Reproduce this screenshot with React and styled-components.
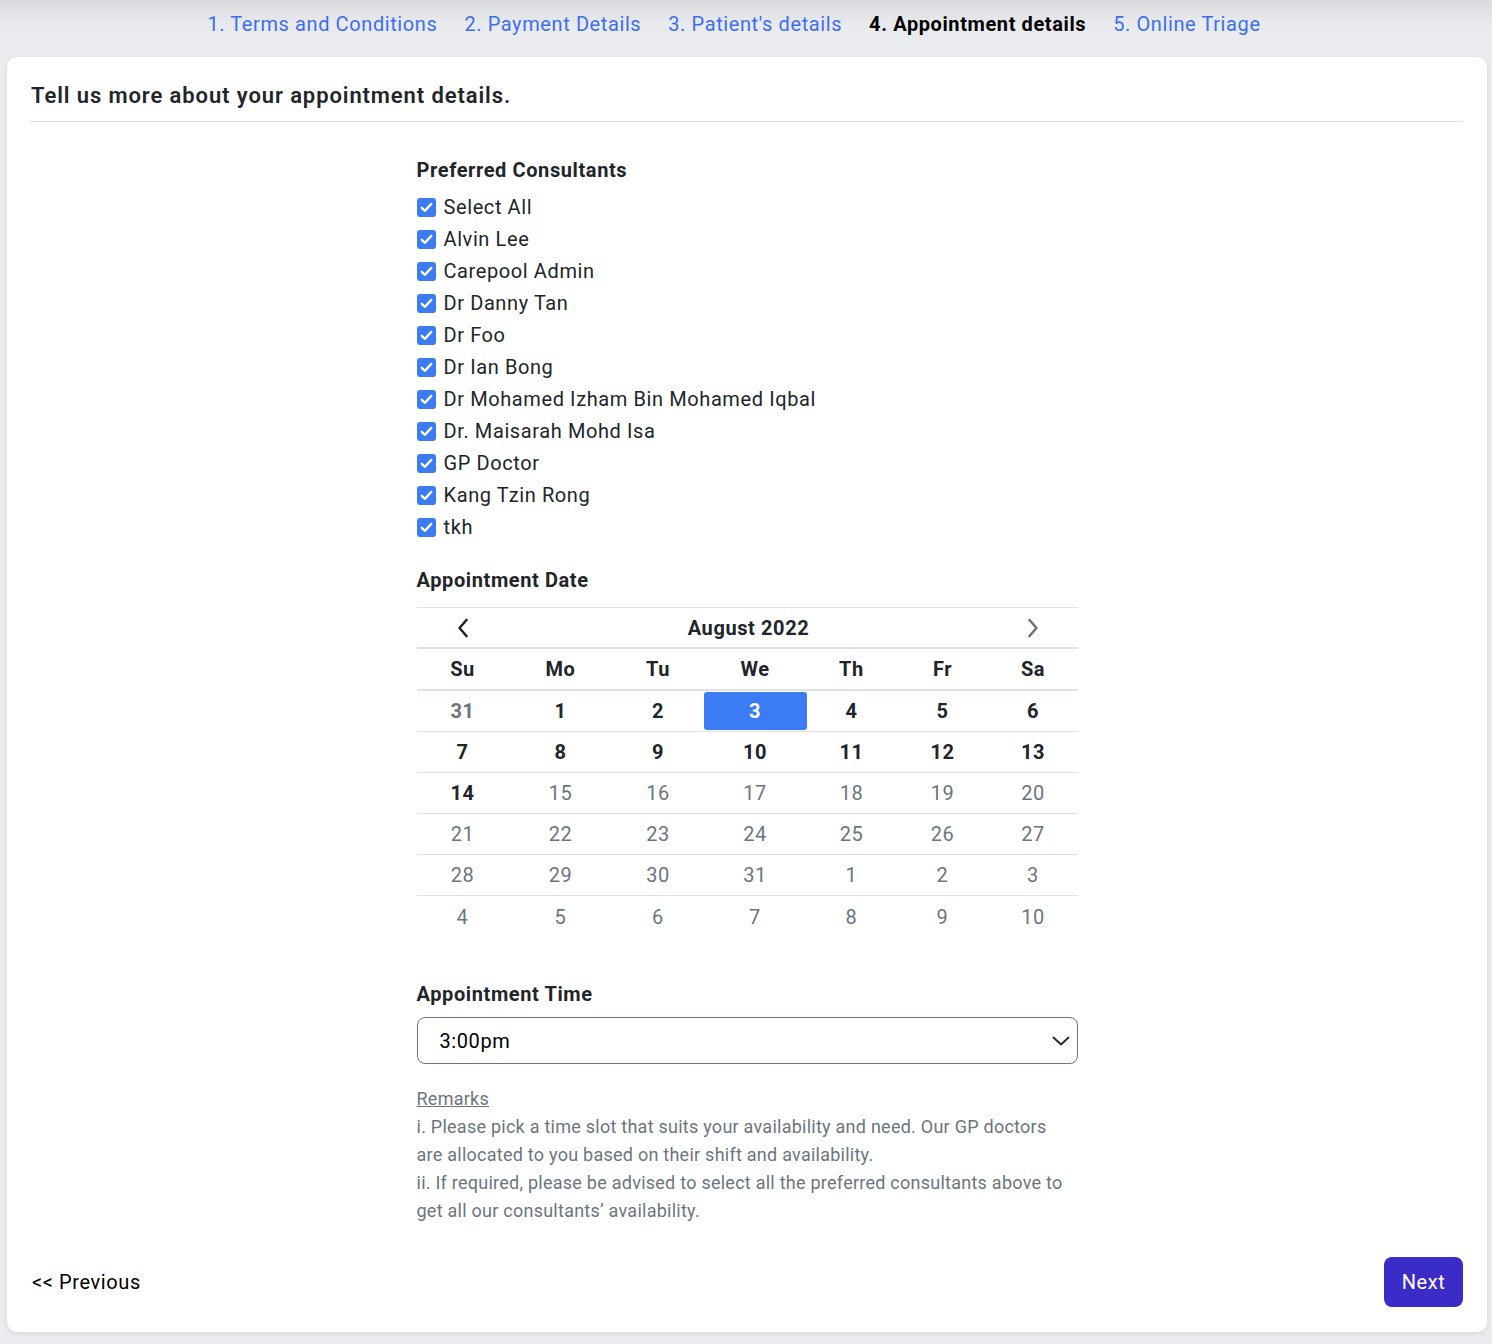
import React from "react";
import styled, { createGlobalStyle } from "styled-components";

const Global = createGlobalStyle`
  html, body { margin: 0; padding: 0; }
  body {
    font-family: Roboto, "Liberation Sans", Arial, sans-serif;
    color: #212529;
    letter-spacing: 0.6px;
    background: linear-gradient(#d9dadd 0px, #e9eaed 24px, #ebecef 60px);
    min-height: 1344px;
  }
  * { box-sizing: border-box; }
`;

const Page = styled.div`
  padding: 0 5px 12px 7px;
`;

const Steps = styled.nav`
  height: 57px;
  display: flex;
  justify-content: center;
  align-items: flex-start;
  gap: 27px;
  padding-top: 10px;
  padding-right: 26px;
  font-size: 20px;
  line-height: 28px;
`;

const Step = styled.a`
  color: ${(p) => (p.$active ? "#000" : "#3d6ef2")};
  font-weight: ${(p) => (p.$active ? 700 : 400)};
  text-decoration: none;
  white-space: nowrap;
`;

const Card = styled.main`
  background: #fff;
  border-radius: 10px;
  box-shadow: 0 2px 6px rgba(0, 0, 0, 0.08);
  padding: 26px 24px 25px;
`;

const Title = styled.h1`
  margin: 0;
  font-size: 22px;
  font-weight: 600;
  letter-spacing: 0.9px;
  line-height: 26px;
  padding-bottom: 12px;
  border-bottom: 1px solid #dee2e6;
  color: #212529;
`;

const Column = styled.div`
  width: 661px;
  margin: 0 auto;
  padding-top: 36px;
`;

const SectionLabel = styled.h2`
  margin: ${(p) => p.$top || 0}px 0 ${(p) => p.$bottom || 0}px;
  font-size: 20px;
  font-weight: 700;
  line-height: 24px;
  color: #212529;
`;

const CheckList = styled.div`
  display: flex;
  flex-direction: column;
`;

const CheckRow = styled.label`
  display: flex;
  align-items: center;
  gap: 8px;
  height: 32px;
  font-size: 20px;
  color: #212529;
`;

const Box = styled.span`
  width: 19px;
  height: 19px;
  border-radius: 3px;
  background: #3b7cf5;
  display: flex;
  align-items: center;
  justify-content: center;
  flex: none;
`;

const Calendar = styled.div`
  margin-top: 15px;
  border-top: 1px solid #dee2e6;
`;

const CalRow = styled.div`
  display: grid;
  grid-template-columns: 92px 104px 91px 103px 90px 92px 89px;
  height: ${(p) => p.$h || 41}px;
  border-bottom: ${(p) => (p.$border === "thick" ? "2px solid #dee2e6" : p.$border === "none" ? "none" : "1px solid #dee2e6")};
`;

const MonthTitle = styled.div`
  grid-column: 2 / 7;
  display: flex;
  align-items: center;
  justify-content: center;
  font-size: 20px;
  font-weight: 700;
`;

const NavCell = styled.div`
  display: flex;
  align-items: center;
  justify-content: center;
`;

const DayName = styled.div`
  display: flex;
  align-items: center;
  justify-content: center;
  font-size: 20px;
  font-weight: 700;
`;

const Day = styled.div`
  display: flex;
  align-items: center;
  justify-content: center;
  font-size: 20px;
  font-weight: ${(p) => (p.$bold ? 700 : 400)};
  color: ${(p) => (p.$selected ? "#fff" : p.$muted ? "#6c757d" : "#212529")};
  background: ${(p) => (p.$selected ? "#3b7cf5" : "transparent")};
  border-radius: 3px;
  margin: ${(p) => (p.$selected ? "1px 0 1px 0" : "0")};
`;

const SelectBox = styled.div`
  margin-top: 11px;
  height: 47px;
  border: 1px solid #6c757d;
  border-radius: 8px;
  display: flex;
  align-items: center;
  justify-content: space-between;
  padding: 0 7px 0 22px;
  font-size: 20px;
  color: #000;
`;

const Remarks = styled.div`
  margin-top: 21px;
  font-size: 18px;
  line-height: 28px;
  letter-spacing: 0.25px;
  color: #6c757d;
`;

const RemarksTitle = styled.div`
  text-decoration: underline;
`;

const Line = styled.div`
  white-space: nowrap;
`;

const Footer = styled.div`
  margin-top: 32px;
  display: flex;
  align-items: center;
  justify-content: space-between;
  padding-left: 1px;
`;

const PrevLink = styled.a`
  font-size: 20px;
  color: #000;
  text-decoration: none;
`;

const NextButton = styled.button`
  height: 50px;
  width: 79px;
  border: none;
  border-radius: 8px;
  background: #3b2bc7;
  color: #fff;
  font-family: inherit;
  letter-spacing: 0.6px;
  font-size: 20px;
`;

const consultants = [
  "Select All",
  "Alvin Lee",
  "Carepool Admin",
  "Dr Danny Tan",
  "Dr Foo",
  "Dr Ian Bong",
  "Dr Mohamed Izham Bin Mohamed Iqbal",
  "Dr. Maisarah Mohd Isa",
  "GP Doctor",
  "Kang Tzin Rong",
  "tkh",
];

const weeks = [
  [[31, "mb"], [1, "b"], [2, "b"], [3, "s"], [4, "b"], [5, "b"], [6, "b"]],
  [[7, "b"], [8, "b"], [9, "b"], [10, "b"], [11, "b"], [12, "b"], [13, "b"]],
  [[14, "b"], [15, "m"], [16, "m"], [17, "m"], [18, "m"], [19, "m"], [20, "m"]],
  [[21, "m"], [22, "m"], [23, "m"], [24, "m"], [25, "m"], [26, "m"], [27, "m"]],
  [[28, "m"], [29, "m"], [30, "m"], [31, "m"], [1, "m"], [2, "m"], [3, "m"]],
  [[4, "m"], [5, "m"], [6, "m"], [7, "m"], [8, "m"], [9, "m"], [10, "m"]],
];

const Check = () => (
  <svg width="13" height="11" viewBox="0 0 13 11">
    <polyline points="1.8,5.8 5,8.8 11.2,2" fill="none" stroke="#fff" strokeWidth="2.4" strokeLinecap="round" strokeLinejoin="round" />
  </svg>
);

const Chevron = ({ dir, color }) => (
  <svg width="12" height="20" viewBox="0 0 12 20">
    <polyline
      points={dir === "left" ? "9.5,2 2.5,10 9.5,18" : "2.5,2 9.5,10 2.5,18"}
      fill="none"
      stroke={color}
      strokeWidth="2.6"
      strokeLinecap="round"
      strokeLinejoin="round"
    />
  </svg>
);

export default function App() {
  return (
    <>
      <Global />
      <Page>
        <Steps>
          <Step href="#">1. Terms and Conditions</Step>
          <Step href="#">2. Payment Details</Step>
          <Step href="#">3. Patient's details</Step>
          <Step $active>4. Appointment details</Step>
          <Step href="#">5. Online Triage</Step>
        </Steps>
        <Card>
          <Title>Tell us more about your appointment details.</Title>
          <Column>
            <SectionLabel $bottom={9}>Preferred Consultants</SectionLabel>
            <CheckList>
              {consultants.map((c) => (
                <CheckRow key={c}>
                  <Box>
                    <Check />
                  </Box>
                  {c}
                </CheckRow>
              ))}
            </CheckList>

            <SectionLabel $top={25}>Appointment Date</SectionLabel>
            <Calendar>
              <CalRow $border="thick" $h={41}>
                <NavCell>
                  <Chevron dir="left" color="#212529" />
                </NavCell>
                <MonthTitle>August 2022</MonthTitle>
                <NavCell>
                  <Chevron dir="right" color="#6c757d" />
                </NavCell>
              </CalRow>
              <CalRow $border="thick" $h={42}>
                {["Su", "Mo", "Tu", "We", "Th", "Fr", "Sa"].map((d) => (
                  <DayName key={d}>{d}</DayName>
                ))}
              </CalRow>
              {weeks.map((w, i) => (
                <CalRow key={i} $border={i === weeks.length - 1 ? "none" : "thin"}>
                  {w.map(([n, t], j) => (
                    <Day
                      key={j}
                      $bold={t.includes("b") || t === "s"}
                      $muted={t.includes("m")}
                      $selected={t === "s"}
                    >
                      {n}
                    </Day>
                  ))}
                </CalRow>
              ))}
            </Calendar>

            <SectionLabel $top={45}>Appointment Time</SectionLabel>
            <SelectBox>
              <span>3:00pm</span>
              <svg width="18" height="10" viewBox="0 0 18 10">
                <polyline points="1.5,1.5 9,8.5 16.5,1.5" fill="none" stroke="#212529" strokeWidth="1.8" strokeLinecap="round" strokeLinejoin="round" />
              </svg>
            </SelectBox>

            <Remarks>
              <RemarksTitle>Remarks</RemarksTitle>
              <Line>i. Please pick a time slot that suits your availability and need. Our GP doctors</Line>
              <Line>are allocated to you based on their shift and availability.</Line>
              <Line>ii. If required, please be advised to select all the preferred consultants above to</Line>
              <Line>get all our consultants’ availability.</Line>
            </Remarks>
          </Column>
          <Footer>
            <PrevLink href="#">&lt;&lt; Previous</PrevLink>
            <NextButton>Next</NextButton>
          </Footer>
        </Card>
      </Page>
    </>
  );
}
